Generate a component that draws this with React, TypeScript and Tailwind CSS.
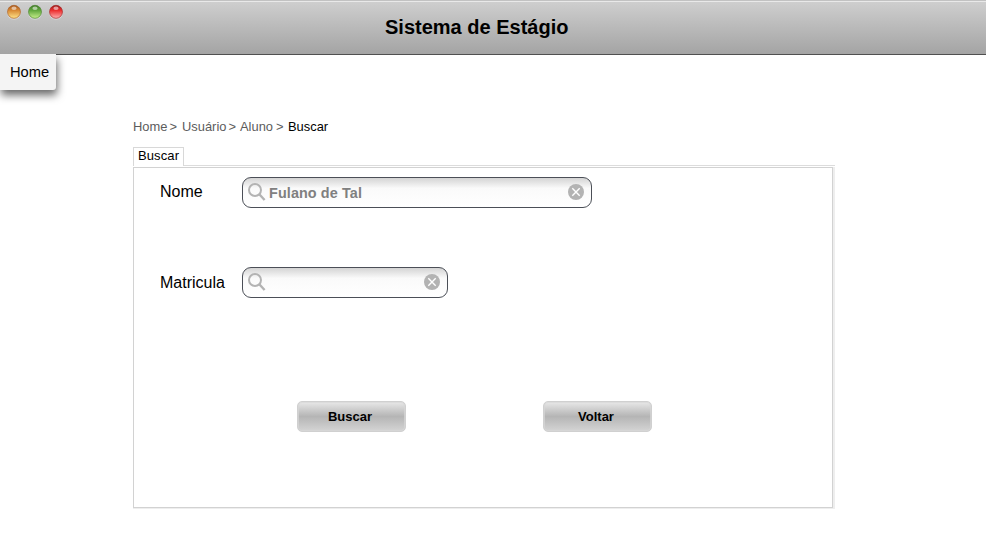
import React from "react";

const lights = [
  { id: "o", rim: "#a5561b", top: "#d98a35", bottom: "#ffe58a" },
  { id: "g", rim: "#3f7a25", top: "#62a83e", bottom: "#c8f08c" },
  { id: "r", rim: "#9c1a1a", top: "#ec3030", bottom: "#ffb0b0" },
];

function WindowLight({ id, rim, top, bottom }: (typeof lights)[number]) {
  return (
    <svg width="15" height="16" viewBox="0 0 15 16">
      <defs>
        <linearGradient id={`light-${id}`} x1="0" y1="0" x2="0" y2="1">
          <stop offset="0" stopColor={rim} />
          <stop offset="0.4" stopColor={top} />
          <stop offset="1" stopColor={bottom} />
        </linearGradient>
      </defs>
      <circle cx="8" cy="8.8" r="7" fill="#ffffff" opacity="0.35" />
      <circle cx="8" cy="7.8" r="6.5" fill={`url(#light-${id})`} stroke={rim} strokeOpacity="0.7" strokeWidth="0.9" />
      <ellipse cx="8" cy="4.2" rx="2.6" ry="1.7" fill="#ffffff" opacity="0.55" />
    </svg>
  );
}

function SearchField({ value, size }: { value: string; size: string }) {
  return (
    <div className={`flex h-[31px] items-center rounded-[9px] border border-[#4b4f57] bg-linear-to-b from-[#d4d4d4] via-[#fafafa] via-35% to-white pr-[7px] pl-[5px] ${size}`}>
      <svg width="19" height="19" viewBox="0 0 19 19" fill="none" stroke="#b3b3b3" strokeWidth="2" className="shrink-0">
        <circle cx="7" cy="7" r="6" />
        <path d="M11.3 11.3 L16.6 17" strokeWidth="2.4" />
      </svg>
      <span className="ml-[2px] grow text-[14.4px] leading-4 font-bold tracking-[0.1px] text-[#808080]">{value}</span>
      <svg width="16" height="16" viewBox="0 0 16 16" className="mb-[2px] shrink-0">
        <circle cx="8" cy="8" r="8" fill="#b3b3b3" />
        <path d="M4.3 4.3 L11.7 11.7 M11.7 4.3 L4.3 11.7" stroke="#fff" strokeWidth="1.4" />
      </svg>
    </div>
  );
}

function Button({ label }: { label: string }) {
  return (
    <button className="h-[31px] w-[109px] rounded-[5px] border border-[#d0d0d0] bg-linear-to-b from-[#e8e8e8] via-[#b5b5b5] via-50% to-[#d4d4d4] pr-[3px] text-[13px] leading-none font-bold text-black shadow-[inset_0_0_0_1px_rgba(215,215,215,0.7)]">
      {label}
    </button>
  );
}

export default function App() {
  return (
    <div className="h-[535px] w-[986px] overflow-hidden bg-white font-['Liberation_Sans',Arial,sans-serif] text-black">
      <header className="h-[55px] border-b border-[#505050] bg-linear-to-b from-[#d0d0d0] to-[#a4a4a4]">
        <div className="h-px bg-[#c2c2c2]" />
        <div className="h-px bg-[#e9e9e9]" />
        <div className="flex h-[52px]">
          <div className="flex w-[385px] gap-[6px] pt-[2px] pl-[6px]">
            {lights.map((l) => (
              <WindowLight key={l.id} {...l} />
            ))}
          </div>
          <h1 className="pt-[13px] text-[20px] leading-6 font-bold">Sistema de Estágio</h1>
        </div>
      </header>
      <nav className="relative -mt-px flex h-[36px] w-[56px] items-center rounded-br-[3px] bg-[#f4f4f4] pl-[10px] text-[14.7px] shadow-[1px_5px_9px_rgba(0,0,0,0.6)] [clip-path:inset(0_-20px_-20px_0)]">
        Home
      </nav>
      <main className="ml-[133px] w-[702px] pt-[28px]">
        <div className="flex h-[17px] items-center text-[12.9px] leading-4 whitespace-pre text-[#5c5c5c]">
          <span className="w-[49px]">Home<span className="pl-[2px]">&gt;</span></span>
          <span className="w-[58px]">Usuário<span className="pl-[2px]">&gt;</span></span>
          <span className="w-[48px]">Aluno<span className="pl-[3px]">&gt;</span></span>
          <span className="text-black">Buscar</span>
        </div>
        <div className="mt-[12px] flex h-[19px] items-end">
          <div className="h-[19px] w-[51px] border border-b-0 border-[#d8d8d8] pl-[4px] text-[13px] leading-[15px] tracking-[0.1px]">Buscar</div>
          <div className="h-px grow bg-[#dcdcdc]" />
        </div>
        <section className="mt-px h-[342px] w-[702px] border-r-2 border-b border-[#eeeeee]">
          <div className="h-[341px] border border-[#d2d2d2] pt-[9px] pl-[26px]">
            <div className="flex h-[31px] items-center">
              <label className="w-[82px] pb-[2px] text-[16px] leading-5">Nome</label>
              <SearchField value="Fulano de Tal" size="w-[350px]" />
            </div>
            <div className="mt-[59px] flex h-[31px] items-center">
              <label className="w-[82px] text-[16px] leading-5">Matricula</label>
              <SearchField value="" size="w-[206px]" />
            </div>
            <div className="mt-[103px] flex gap-[137px] pl-[137px]">
              <Button label="Buscar" />
              <Button label="Voltar" />
            </div>
          </div>
        </section>
      </main>
    </div>
  );
}
